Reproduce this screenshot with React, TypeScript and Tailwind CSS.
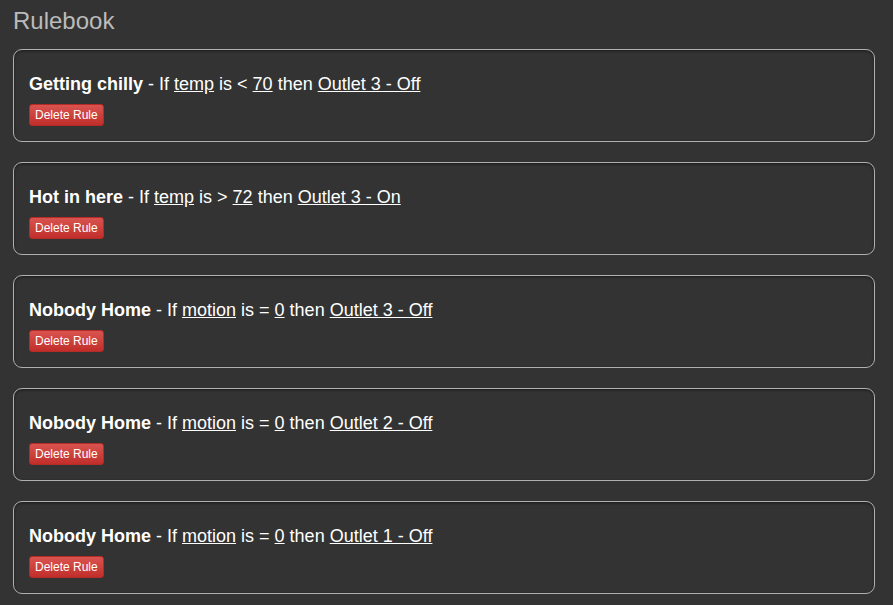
const RULES = [
  { name: "Getting chilly", sensor: "temp", op: "<", value: "70", action: "Outlet 3 - Off" },
  { name: "Hot in here", sensor: "temp", op: ">", value: "72", action: "Outlet 3 - On" },
  { name: "Nobody Home", sensor: "motion", op: "=", value: "0", action: "Outlet 3 - Off" },
  { name: "Nobody Home", sensor: "motion", op: "=", value: "0", action: "Outlet 2 - Off" },
  { name: "Nobody Home", sensor: "motion", op: "=", value: "0", action: "Outlet 1 - Off" },
];

export default function App() {
  return (
    <div className="min-h-screen bg-[#333333] pl-[13px] pr-[18px] pt-[6px] font-['Liberation_Sans',Arial,sans-serif] text-white">
      <h1 className="mb-[13px] text-[24px] leading-[30px] text-[#bbbbbb]">Rulebook</h1>

      {RULES.map((r, i) => (
        <div
          key={i}
          className="mb-[20px] rounded-[9px] border border-[#b0b0b0] bg-[#333333] px-[15px] pb-[15px] pt-[21px] shadow-[inset_0_1px_3px_rgba(0,0,0,0.5)]"
        >
          <div className="text-[18px] leading-[26px]">
            <b>{r.name}</b> - If <u>{r.sensor}</u> is {r.op} <u>{r.value}</u> then{" "}
            <u>{r.action}</u>
          </div>
          <button className="mt-[7px] block h-[22px] rounded-[3px] border border-[#b52b27] bg-gradient-to-b from-[#d9534f] to-[#c12e2a] px-[5px] text-[12px] leading-[20px] text-white">
            Delete Rule
          </button>
        </div>
      ))}
    </div>
  );
}
